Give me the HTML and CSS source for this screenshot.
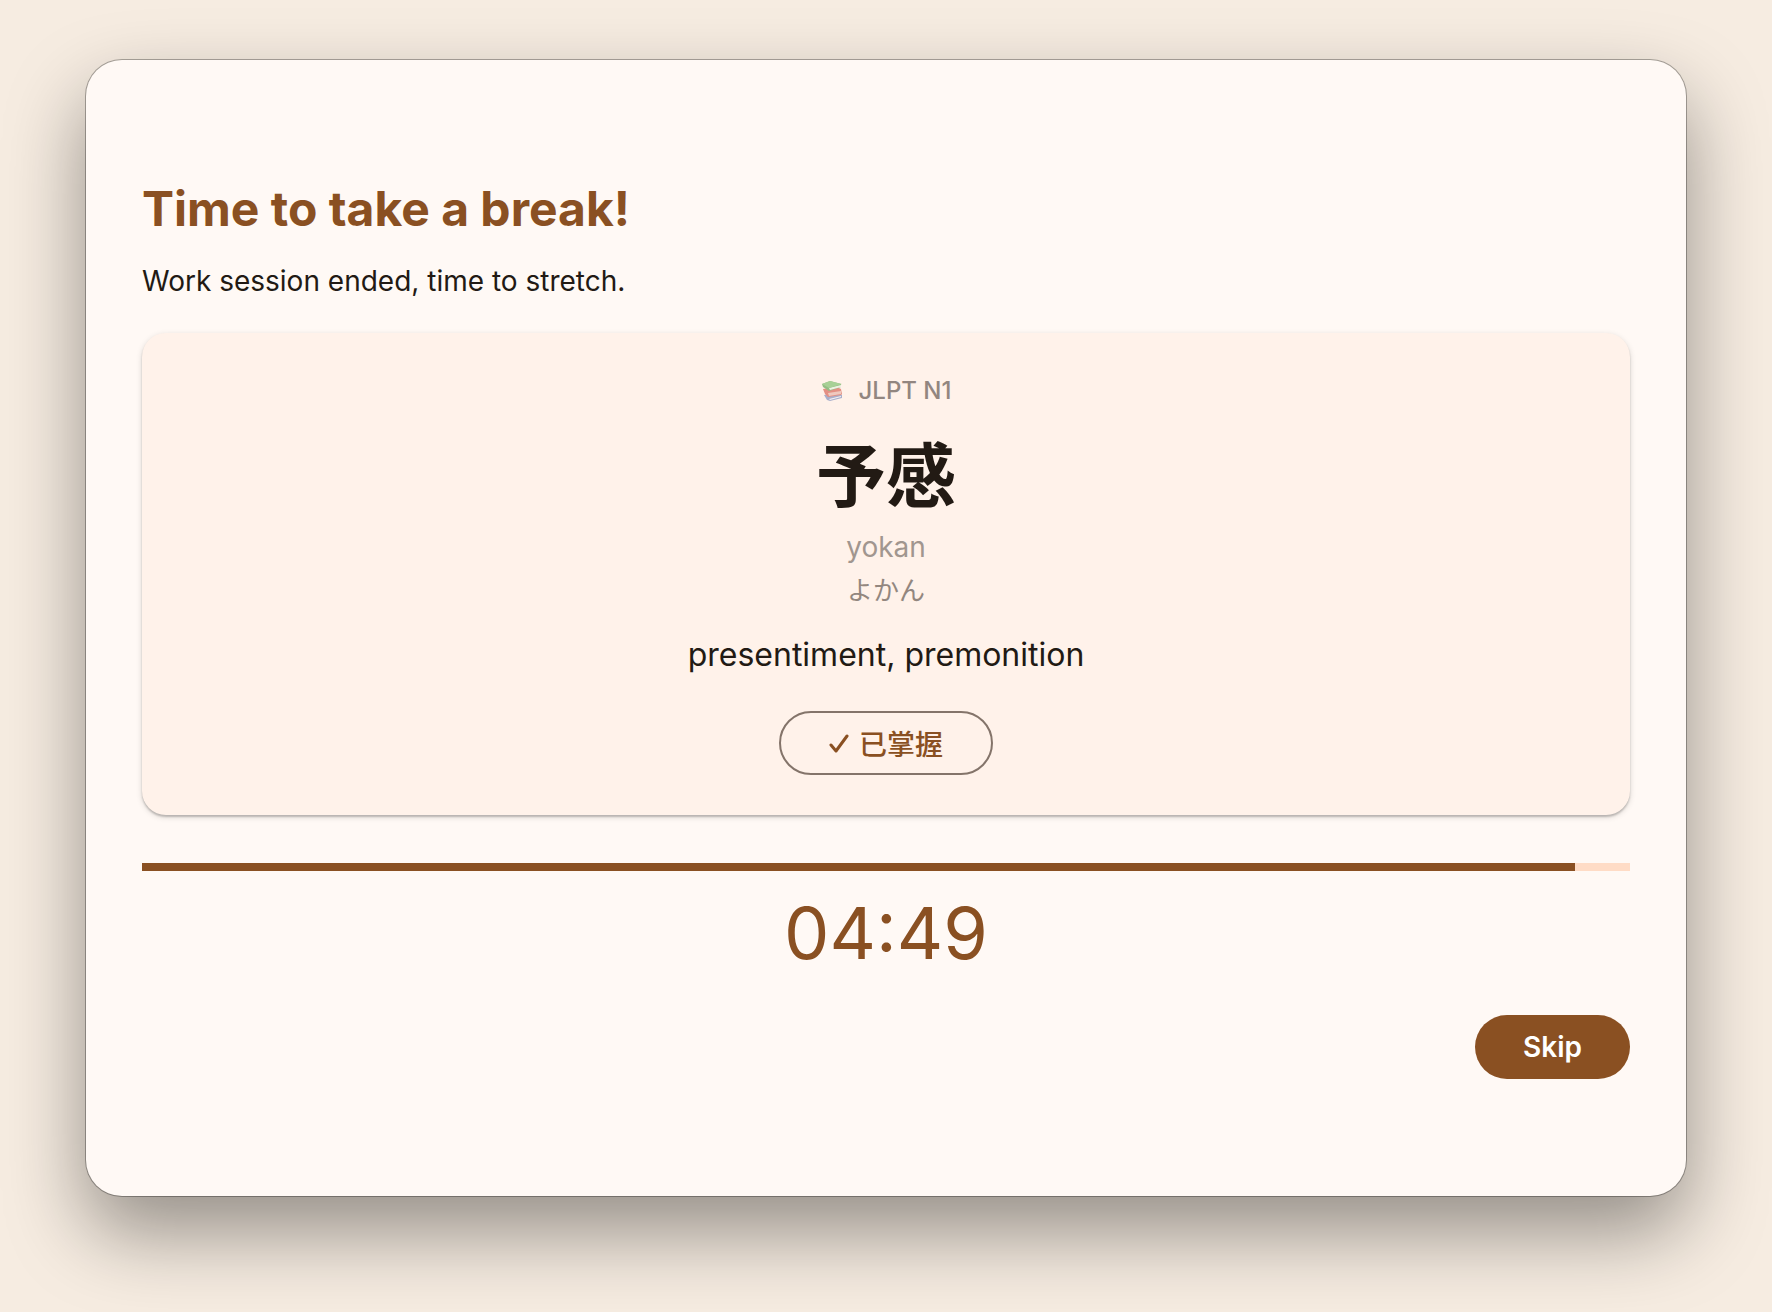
FILE: index.html
```
<!DOCTYPE html>
<html lang="en">
  <head>
    <meta charset="UTF-8" />
    <meta name="viewport" content="width=device-width, initial-scale=1.0" />
    <title>Break Reminder</title>
    <link rel="stylesheet" href="styles.css">
  </head>
  <body>
    <main class="window">
      <h1 class="title">Time to take a break!</h1>
      <p class="subtitle">Work session ended, time to stretch.</p>

      <!-- Vocabulary card -->
      <section class="card">
        <div class="level">
          <svg class="books" viewBox="0 0 22 22" aria-hidden="true">
            <path d="M3 15l3 5 3 1 12-3v-3l-4-3z" fill="#a9afcb" />
            <path d="M8 19l12-3v1L9 20z" fill="#f4f0f2" />
            <path d="M2 9l2 5 3 3 13-2 1-1-1-5-4-2z" fill="#e39084" />
            <path d="M7 13l13-2v3L8 16z" fill="#efc9bf" />
            <path d="M1 4l1 3 6 4 12-4V4L9 1z" fill="#94bd84" />
            <path d="M8 8l12-3v2L9 10z" fill="#eef0e2" />
            <path d="M1 4l8-3 12 3-13 4z" fill="#a8d096" />
          </svg>
          <span>JLPT N1</span>
        </div>
        <h2 class="word" lang="ja">予感</h2>
        <p class="romaji">yokan</p>
        <p class="kana" lang="ja">よかん</p>
        <p class="meaning">presentiment, premonition</p>
        <button class="btn btn-outline" type="button" lang="zh-CN">
          <svg class="check" viewBox="0 0 20 20" aria-hidden="true">
            <path d="M2 12l5 6L18 3" />
          </svg>
          已掌握
        </button>
      </section>

      <!-- Remaining break time -->
      <div class="progress" role="progressbar" aria-label="Break time left" aria-valuenow="289" aria-valuemin="0" aria-valuemax="300">
        <div class="progress-fill" style="width: 96.33%"></div>
      </div>
      <time class="timer">04:49</time>

      <button class="btn btn-filled" type="button">Skip</button>
    </main>
  </body>
</html>
```
FILE: styles.css
```
* {
  box-sizing: border-box;
  margin: 0;
}

body {
  min-height: 100vh;
  display: flex;
  padding: 60px 86px 116px;
  background: #f6ece1;
  color: #221a14;
  font-family: Inter, "Noto Sans CJK JP", sans-serif;
}

.window {
  flex: 1;
  display: flex;
  flex-direction: column;
  justify-content: center;
  padding: 56px;
  background: #fff9f5;
  border-radius: 36px;
  box-shadow: 0 0 0 1px rgba(0, 0, 0, 0.3), 0 36px 80px rgba(0, 0, 0, 0.4);
}

.title {
  margin-bottom: 20px;
  font-size: 48px;
  font-weight: 700;
  line-height: 64px;
  color: #8a5022;
}

.subtitle {
  margin-bottom: 32px;
  font-size: 28px;
  line-height: 40px;
}

/* Vocabulary card */
.card {
  display: flex;
  flex-direction: column;
  align-items: center;
  padding: 40px;
  text-align: center;
  background: #fff2ea;
  border-radius: 24px;
  box-shadow: 0 2px 2px rgba(0, 0, 0, 0.2), 0 2px 6px rgba(0, 0, 0, 0.14);
}

.level {
  display: flex;
  align-items: center;
  gap: 16px;
  margin-bottom: 24px;
  font-size: 24px;
  font-weight: 500;
  line-height: 36px;
  color: #928680;
}

.books {
  width: 22px;
  height: 22px;
}

.word {
  margin-bottom: 6px;
  font-size: 70px;
  font-weight: 700;
  line-height: 88px;
}

.romaji {
  margin-bottom: 4px;
  font-size: 28px;
  line-height: 40px;
  color: #a1968f;
}

.kana {
  margin-bottom: 20px;
  font-size: 26px;
  line-height: 40px;
  color: #93877f;
}

.meaning {
  margin-bottom: 32px;
  font-size: 32px;
  line-height: 48px;
}

/* Buttons */
.btn {
  display: flex;
  align-items: center;
  justify-content: center;
  height: 64px;
  padding: 0 48px;
  border: none;
  border-radius: 32px;
  font-family: Inter, "Noto Sans CJK SC", sans-serif;
  font-size: 28px;
  font-weight: 500;
  cursor: pointer;
}

.btn-outline {
  gap: 10px;
  border: 2px solid #84746a;
  background: transparent;
  color: #8a5022;
}

.btn-filled {
  align-self: flex-end;
  background: #8a5022;
  color: #fff;
  font-weight: 600;
}

.check {
  width: 20px;
  height: 20px;
  fill: none;
  stroke: currentColor;
  stroke-width: 3;
  stroke-linecap: round;
  stroke-linejoin: round;
}

/* Countdown */
.progress {
  height: 8px;
  margin-top: 48px;
  background: #ffdcc6;
}

.progress-fill {
  height: 100%;
  background: #8a5022;
}

.timer {
  margin: 20px 0 40px;
  font-size: 72px;
  font-weight: 400;
  line-height: 84px;
  text-align: center;
  color: #8a5022;
}
```
